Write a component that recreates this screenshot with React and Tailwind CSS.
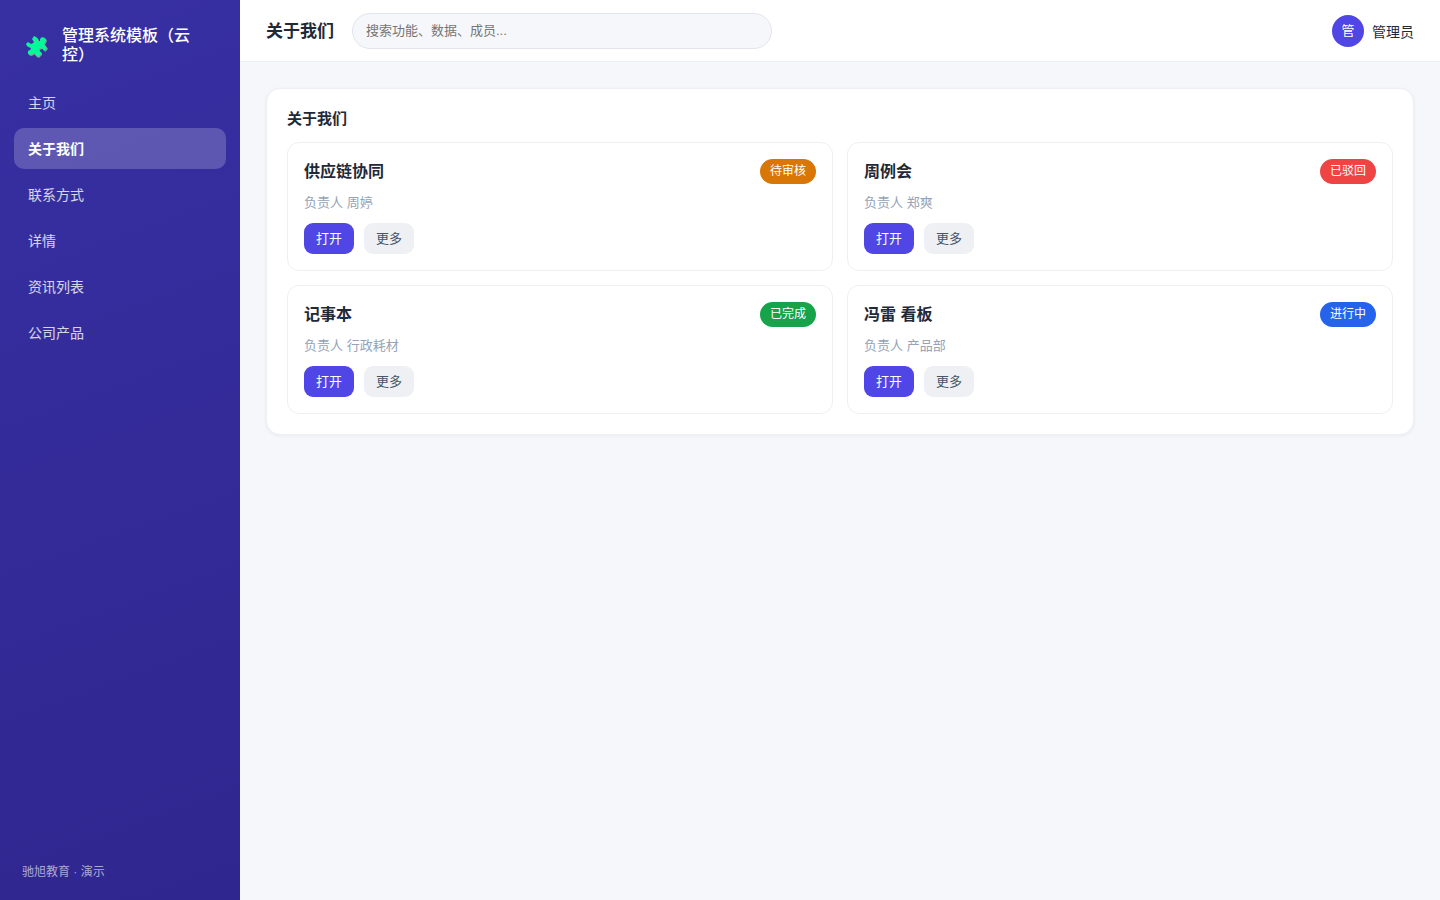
import React from 'react';

function PuzzleIcon() {
    return (
        <svg viewBox="0 0 22 22" className="w-[22px] h-[22px] mt-1 shrink-0" aria-hidden="true">
            <path
                transform="translate(1 1)"
                fill="#9a9292"
                d="M6 3L8 0L10 1L12 3L12 5L14 5L14 3L16 1L19 2L20 4L19 6L18 8L21 12L18 15L17 13L15 12L13 13L13 15L15 16L15 18L12 21L10 20L8 17L7 18L4 19L2 18L2 15L4 14L5 13L4 11L1 10L0 8L2 6L5 8L7 7L8 6Z"
            />
            <path
                fill="#00fa9a"
                d="M6 3L8 0L10 1L12 3L12 5L14 5L14 3L16 1L19 2L20 4L19 6L18 8L21 12L18 15L17 13L15 12L13 13L13 15L15 16L15 18L12 21L10 20L8 17L7 18L4 19L2 18L2 15L4 14L5 13L4 11L1 10L0 8L2 6L5 8L7 7L8 6Z"
            />
        </svg>
    );
}

function Sidebar() {
    return (
        <aside className="w-60 shrink-0 flex flex-col px-3.5 pt-5 pb-[19px] text-white bg-[linear-gradient(160deg,#3730a3,#30268f)]">
            <div className="flex items-center gap-3.5 px-3 pt-1.5 pb-[18px]">
                <PuzzleIcon />
                <h2 className="text-base leading-[19px] font-medium">管理系统模板（云控）</h2>
            </div>
            <nav className="flex flex-col gap-[5px]">
                {menus.map((m) => (
                    <a
                        key={m}
                        href="#"
                        aria-current={m === "关于我们" ? "page" : undefined}
                        className={
                            m === "关于我们"
                                ? "px-3.5 pt-[11px] pb-[9px] rounded-[10px] text-sm leading-[21px] font-bold text-white bg-white/20"
                                : "px-3.5 pt-[11px] pb-[9px] rounded-[10px] text-sm leading-[21px] text-white/80"
                        }
                    >
                        {m}
                    </a>
                ))}
            </nav>
            <p className="mt-auto px-2 text-xs leading-[18px] text-white/60">驰旭教育 · 演示</p>
        </aside>
    );
}

function Header() {
    return (
        <header className="flex items-center gap-[18px] px-[26px] pt-[13px] pb-3 bg-white border-b border-[#eceef2]">
            <h1 className="pt-0.5 text-[17px] leading-6 font-bold whitespace-nowrap">关于我们</h1>
            <input
                type="search"
                aria-label="搜索"
                placeholder="搜索功能、数据、成员..."
                className="w-full max-w-[420px] h-9 px-[13px] pb-0.5 rounded-full border border-[#e2e5ee] bg-[#f6f7fb] text-[13px] outline-none placeholder:text-[#757575]"
            />
            <div className="ml-auto flex items-center gap-2 whitespace-nowrap">
                <span className="w-8 h-8 rounded-full bg-[#4f46e5] text-white text-[13px] flex items-center justify-center">
                    管
                </span>
                <span className="pt-0.5 text-sm">管理员</span>
            </div>
        </header>
    );
}

function ItemCard({ item }) {
    return (
        <article className="p-4 border border-[#eeeff3] rounded-xl">
            <div className="flex items-start justify-between">
                <h3 className="text-base leading-[26px] font-bold">{item.title}</h3>
                <span className={`px-2.5 rounded-full text-xs leading-[25px] text-white ${item.color}`}>
                    {item.status}
                </span>
            </div>
            <p className="mt-2 text-[13px] leading-5 text-[#94a3b8]">负责人 {item.owner}</p>
            <div className="mt-2.5 flex gap-2.5">
                <button type="button" className="px-3 rounded-[9px] text-[13px] leading-[31px] text-white bg-[#4f46e5]">
                    打开
                </button>
                <button type="button" className="px-3 rounded-[9px] text-[13px] leading-[31px] text-[#475569] bg-[#eef0f4]">
                    更多
                </button>
            </div>
        </article>
    );
}

function App() {
    return (
        <div className="min-h-screen flex bg-[#f5f7fb] text-[#1f2937] font-['Liberation_Sans','Noto_Sans_CJK_SC',sans-serif]">
            <Sidebar />
            <div className="flex-1 min-w-0">
                <Header />
                <main className="p-[26px]">
                    <section className="p-5 bg-white bg-clip-padding rounded-[14px] border border-[#eff0f5] shadow-[0_1px_4px_rgba(15,23,42,0.05)]">
                        <h2 className="mb-[13px] text-[15px] leading-5 font-bold">关于我们</h2>
                        <div className="grid grid-cols-2 gap-3.5">
                            {items.map((item) => (
                                <ItemCard key={item.title} item={item} />
                            ))}
                        </div>
                    </section>
                </main>
            </div>
        </div>
    );
}

const menus = ["主页", "关于我们", "联系方式", "详情", "资讯列表", "公司产品"];

const items = [
    { title: "供应链协同", owner: "周婷", status: "待审核", color: "bg-[#d97706]" },
    { title: "周例会", owner: "郑爽", status: "已驳回", color: "bg-[#ef4444]" },
    { title: "记事本", owner: "行政耗材", status: "已完成", color: "bg-[#16a34a]" },
    { title: "冯雷 看板", owner: "产品部", status: "进行中", color: "bg-[#2563eb]" },
];

export default App;
